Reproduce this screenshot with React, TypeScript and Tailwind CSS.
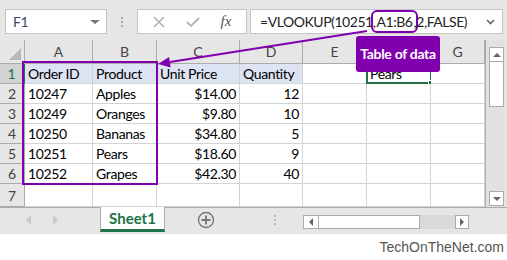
import React from 'react'

const cols = ['A', 'B', 'C', 'D', 'E', 'F', 'G']
const widths = [68, 64, 83, 63, 64, 64, 54]

const data: string[][] = [
  ['Order ID', 'Product', 'Unit Price', 'Quantity', '', 'Pears', ''],
  ['10247', 'Apples', '$14.00', '12', '', '', ''],
  ['10249', 'Oranges', '$9.80', '10', '', '', ''],
  ['10250', 'Bananas', '$34.80', '5', '', '', ''],
  ['10251', 'Pears', '$18.60', '9', '', '', ''],
  ['10252', 'Grapes', '$42.30', '40', '', '', ''],
  ['', '', '', '', '', '', ''],
]

const Cell = ({ r, c, v }: { r: number; c: number; v: string }) => {
  const right = r > 0 && (c === 2 || c === 3)
  const tint = r === 0 && c < 4
  const selected = r === 0 && c === 5
  return (
    <div
      className={
        'relative border-r border-b border-[#d4d4d4] px-[3px] leading-[19px] whitespace-nowrap ' +
        (r === 6 ? 'h-[23px] ' : 'h-[20px] ') +
        (right ? 'text-right ' : 'text-left ') +
        (tint ? 'bg-[#dde3f3]' : 'bg-white')
      }
    >
      {v}
      {selected && (
        <div className="absolute -left-[1px] -top-[1px] w-[66px] h-[21px] border-2 border-[#217346]">
          <div className="absolute -right-[4px] -bottom-[4px] w-[6px] h-[6px] bg-[#217346] border border-white" />
        </div>
      )}
    </div>
  )
}

export default function App() {
  return (
    <div className="relative w-[507px] h-[260px] overflow-hidden bg-white font-[Lato,sans-serif] text-[14px] tracking-[-0.35px] text-black">
      {/* formula bar */}
      <div className="h-[40px] bg-[#e6e6e6] flex items-start pt-[9px] pl-[5px]">
        <div className="w-[102px] h-[25px] bg-white border border-[#c6c6c6] flex items-center justify-between pl-[7px] pr-[6px]">
          <span className="text-[#3b4a6b]">F1</span>
          <span className="w-0 h-0 border-l-[5px] border-r-[5px] border-t-[4px] border-l-transparent border-r-transparent border-t-[#777]" />
        </div>
        <div className="w-[30px] h-[25px] flex flex-col items-center justify-center gap-[2px]">
          <span className="w-[2px] h-[2px] bg-[#aaa]" />
          <span className="w-[2px] h-[2px] bg-[#aaa]" />
          <span className="w-[2px] h-[2px] bg-[#aaa]" />
        </div>
        <div className="w-[110px] h-[25px] bg-white border border-[#c6c6c6] flex items-center justify-around px-[4px]">
          <svg width="12" height="12" viewBox="0 0 12 12">
            <path d="M1 1 L11 11 M11 1 L1 11" stroke="#b4b4b4" strokeWidth="1.6" />
          </svg>
          <svg width="14" height="12" viewBox="0 0 14 12">
            <path d="M1 6 L5 10 L13 2" stroke="#b4b4b4" strokeWidth="1.8" fill="none" />
          </svg>
          <span className="font-['Liberation_Serif',serif] italic text-[15px] tracking-normal text-[#555]">fx</span>
        </div>
        <div className="ml-[3px] w-[253px] h-[25px] bg-white border border-[#c6c6c6] flex items-center justify-between pl-[9px] pr-[7px]">
          <span className="flex items-center text-[#222] tracking-[-0.45px] whitespace-nowrap">
            =VLOOKUP(10251,
            <span className="h-[23px] -mx-[4px] px-[3px] flex items-center rounded-[6px] border-2 border-[#8000b0]">A1:B6</span>
            ,2,FALSE)
          </span>
          <svg width="9" height="6" viewBox="0 0 9 6">
            <path d="M1 1 L4.5 4.5 L8 1" stroke="#666" strokeWidth="1.6" fill="none" />
          </svg>
        </div>
      </div>

      {/* grid + vertical scrollbar */}
      <div className="flex h-[167px]">
        <div className="w-[485px] shrink-0 h-[167px] overflow-hidden">
          <div className="grid grid-cols-[25px_68px_64px_83px_63px_64px_64px_54px]">
            <div className="h-[24px] bg-[#e6e6e6] border-r border-b border-[#ababab] flex items-end justify-end pr-[3px] pb-[3px]">
              <svg width="12" height="12" viewBox="0 0 12 12">
                <polygon points="12,0 12,12 0,12" fill="#b8b8b8" />
              </svg>
            </div>
            {cols.map((c, i) => (
              <div
                key={c}
                className={
                  'h-[24px] border-r border-b flex items-center justify-center text-[#444] tracking-normal ' +
                  (c === 'F'
                    ? 'bg-[#d2d2d2] border-r-[#ababab] border-b-2 border-b-[#217346] text-[#217346]'
                    : 'bg-[#e6e6e6] border-[#ababab]')
                }
                style={{ width: widths[i] }}
              >
                {c === 'F' ? '' : c}
              </div>
            ))}
            {data.map((row, r) => (
              <React.Fragment key={r}>
                <div
                  className={
                    'flex items-center justify-center border-b border-[#ababab] ' +
                    (r === 6 ? 'h-[23px] ' : 'h-[20px] ') +
                    (r === 0
                      ? 'bg-[#d2d2d2] text-[#217346] border-r-2 border-r-[#217346]'
                      : 'bg-[#e6e6e6] text-[#444] border-r')
                  }
                >
                  {r + 1}
                </div>
                {row.map((v, c) => (
                  <Cell key={c} r={r} c={c} v={v} />
                ))}
              </React.Fragment>
            ))}
          </div>
        </div>
        <div className="w-[22px] shrink-0 bg-[#e2e2e2] border-l border-[#ababab] flex flex-col items-center pt-[7px] pb-[1px]">
          <div className="w-[15px] h-[15px] bg-white border border-[#ababab] flex items-center justify-center">
            <span className="w-0 h-0 border-l-[4px] border-r-[4px] border-b-[4px] border-l-transparent border-r-transparent border-b-[#666]" />
          </div>
          <div className="w-[15px] h-[45px] bg-white border border-t-0 border-[#ababab]" />
          <div className="flex-1" />
          <div className="w-[15px] h-[15px] bg-white border border-[#ababab] flex items-center justify-center">
            <span className="w-0 h-0 border-l-[4px] border-r-[4px] border-t-[4px] border-l-transparent border-r-transparent border-t-[#666]" />
          </div>
        </div>
      </div>

      {/* sheet tabs */}
      <div className="h-[27px] bg-[#e6e6e6] border-t border-[#ababab] flex items-start">
        <div className="w-[100px] h-[24px] flex items-center pl-[26px] gap-[22px]">
          <span className="w-0 h-0 border-t-[5px] border-b-[5px] border-r-[5px] border-t-transparent border-b-transparent border-r-[#c8c8c8]" />
          <span className="w-0 h-0 border-t-[5px] border-b-[5px] border-l-[5px] border-t-transparent border-b-transparent border-l-[#c8c8c8]" />
        </div>
        <div className="-mt-[1px] w-[65px] h-[25px] bg-white border-x border-[#ababab] border-b-[3px] border-b-[#217346] flex items-center justify-center font-bold text-[15px] tracking-normal text-[#217346]">
          Sheet1
        </div>
        <div className="w-[82px] h-[24px] flex items-center justify-center">
          <svg width="18" height="18" viewBox="0 0 18 18">
            <circle cx="9" cy="9" r="7.5" stroke="#777" strokeWidth="1.4" fill="none" />
            <path d="M9 4.5 V13.5 M4.5 9 H13.5" stroke="#777" strokeWidth="1.8" />
          </svg>
        </div>
        <div className="w-[56px] h-[24px] flex flex-col items-center justify-center gap-[2px]">
          <span className="w-[2px] h-[2px] bg-[#bbb]" />
          <span className="w-[2px] h-[2px] bg-[#bbb]" />
          <span className="w-[2px] h-[2px] bg-[#bbb]" />
        </div>
        <div className="mt-[7px] flex h-[14px]">
          <div className="w-[16px] h-[14px] bg-white border border-[#ababab] flex items-center justify-center">
            <span className="w-0 h-0 border-t-[4px] border-b-[4px] border-r-[4px] border-t-transparent border-b-transparent border-r-[#666]" />
          </div>
          <div className="w-[101px] h-[14px] bg-white border border-l-0 border-[#ababab]" />
          <div className="w-[35px] h-[14px] bg-[#dadada]" />
          <div className="w-[14px] h-[14px] bg-white border border-[#ababab] flex items-center justify-center">
            <span className="w-0 h-0 border-t-[4px] border-b-[4px] border-l-[4px] border-t-transparent border-b-transparent border-l-[#666]" />
          </div>
        </div>
      </div>

      {/* footer */}
      <div className="h-[26px] flex items-center justify-end pr-[3px] font-['Liberation_Sans',sans-serif] text-[14px] tracking-normal text-[#555]">
        TechOnTheNet.com
      </div>

      {/* annotations */}
      <svg className="absolute left-0 top-0 pointer-events-none" width="507" height="260">
        <rect x="23" y="62" width="134" height="122" stroke="#8000b0" strokeWidth="2" fill="none" />
        <line x1="367" y1="31" x2="170" y2="62" stroke="#8000b0" strokeWidth="2" />
        <polygon points="158,64 170.6,67.4 169.1,57" fill="#8000b0" />
      </svg>
      <div className="absolute left-[356px] top-[36px] w-[84px] h-[36px] rounded-[3px] bg-[#8000b0] flex items-start justify-center pt-[7px] font-bold text-white text-[14px] tracking-[-0.3px]">
        Table of data
      </div>
    </div>
  )
}
